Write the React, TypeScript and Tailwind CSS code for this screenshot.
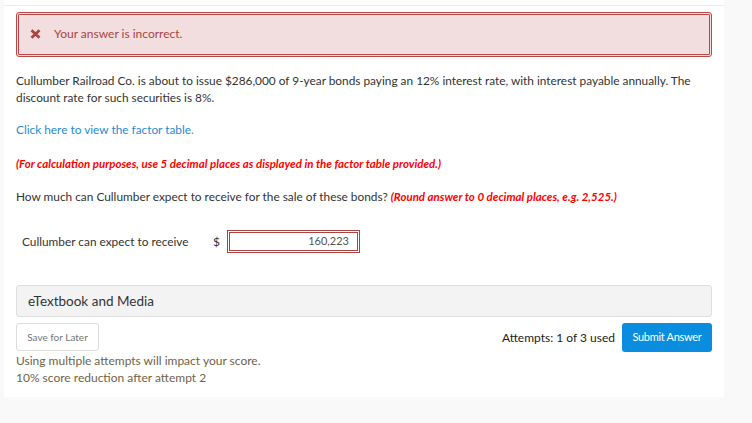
import React from "react";

export default function App() {
  return (
    <div
      className="w-[752px] h-[423px] bg-[#f9f9f9] overflow-hidden text-[#333]"
      style={{ fontFamily: "Lato, 'Open Sans', sans-serif" }}
    >
      <div className="ml-[4px] w-[720px] h-[397px] bg-white">
        <div className="h-[5px]" />
        <div className="h-px bg-[#ebebeb]" />
        <div className="px-3 pt-[6px]">
          {/* alert */}
          <div className="h-[45px] border-[3px] border-double border-[#b94a48] rounded-[3px] bg-[#f2dede] flex items-center pl-[11px] pb-[2px]">
            <svg width="11" height="10" viewBox="0 0 11 10" className="mr-[13px]">
              <path d="M1.5 1.2 L9.5 8.8 M9.5 1.2 L1.5 8.8" stroke="#a94442" strokeWidth="2.8" strokeLinecap="butt" />
            </svg>
            <span className="text-[12px] text-[#a94442]">Your answer is incorrect.</span>
          </div>

          <p className="mt-[16px] text-[11.85px] leading-[16.5px] text-[#333]">
            Cullumber Railroad Co. is about to issue $286,000 of 9-year bonds paying an 12% interest rate, with interest payable annually. The discount rate for such securities is 8%.
          </p>

          <p className="mt-[15px] text-[11.85px] leading-[17px] text-[#1f8ad8]">Click here to view the factor table.</p>

          <p className="mt-[17px] text-[11.5px] leading-[17px] text-[#ff0000] font-bold italic">
            (For calculation purposes, use 5 decimal places as displayed in the factor table provided.)
          </p>

          <p className="mt-[16px] text-[11.85px] leading-[17px] text-[#333]">
            How much can Cullumber expect to receive for the sale of these bonds?{" "}
            <span className="text-[11.5px] text-[#ff0000] font-bold italic">(Round answer to 0 decimal places, e.g. 2,525.)</span>
          </p>

          <div className="mt-[25px] flex items-center pl-[6px]">
            <span className="text-[11.85px] text-[#333] w-[191px]">Cullumber can expect to receive</span>
            <span className="text-[12px] text-[#333] w-[14px]">$</span>
            <div className="w-[133px] h-[23px] border-[3px] border-double border-[#a94442] flex items-center justify-end pr-[8px] text-[11px] text-[#555]">
              160,223
            </div>
          </div>

          <div className="mt-[32px] h-[32px] border border-[#dddddd] rounded-[3px] bg-[#f3f3f3] flex items-center pl-[11px] text-[13.5px] text-[#333]">
            eTextbook and Media
          </div>

          <div className="mt-[6px] flex items-start justify-between">
            <div>
              <div className="w-[83px] h-[28px] border border-[#dddddd] rounded-[3px] bg-white flex items-center justify-center text-[10px] text-[#777]">
                Save for Later
              </div>
              <div className="mt-[1px] text-[12px] leading-[17px] text-[#6f6347]">
                Using multiple attempts will impact your score.
                <br />
                10% score reduction after attempt 2
              </div>
            </div>
            <div className="flex items-center gap-[7px]">
              <span className="text-[12px] text-[#222]">Attempts: 1 of 3 used</span>
              <div className="w-[90px] h-[29px] rounded-[3px] bg-[#0a8ddf] flex items-center justify-center text-[11px] tracking-[-0.3px] text-white">
                Submit Answer
              </div>
            </div>
          </div>
        </div>
      </div>
    </div>
  );
}
